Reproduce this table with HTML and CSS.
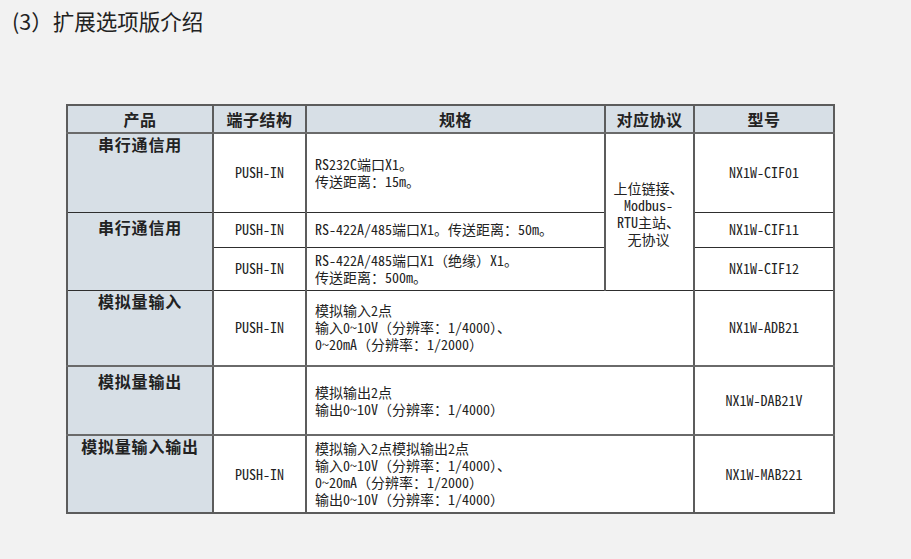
FILE: index.html
```html
<!DOCTYPE html>
<html lang="zh-CN">
<head>
<meta charset="utf-8">
<link rel="stylesheet" href="styles.css">
</head>
<body>
<h1 class="title">(3）扩展选项版介绍</h1>
<table class="spec-table">
  <colgroup>
    <col class="c-prod"><col class="c-term"><col class="c-spec"><col class="c-proto"><col class="c-model">
  </colgroup>
  <thead>
    <tr class="r-head">
      <th>产品</th><th>端子结构</th><th>规格</th><th>对应协议</th><th>型号</th>
    </tr>
  </thead>
  <tbody>
    <tr class="r1">
      <td class="prod">串行通信用</td>
      <td class="term">PUSH-IN</td>
      <td class="spec"><div class="ln">RS232C端口X1。</div><div class="ln">传送距离：15m。</div></td>
      <td class="proto" rowspan="3"><div class="ln">上位链接、</div><div class="ln">Modbus-</div><div class="ln">RTU主站、</div><div class="ln">无协议</div></td>
      <td class="model">NX1W-CIF01</td>
    </tr>
    <tr class="r2">
      <td class="prod prod-2" rowspan="2">串行通信用</td>
      <td class="term">PUSH-IN</td>
      <td class="spec"><div class="ln">RS-422A/485端口X1。传送距离：50m。</div></td>
      <td class="model">NX1W-CIF11</td>
    </tr>
    <tr class="r3">
      <td class="term">PUSH-IN</td>
      <td class="spec"><div class="ln">RS-422A/485端口X1（绝缘）X1。</div><div class="ln">传送距离：500m。</div></td>
      <td class="model">NX1W-CIF12</td>
    </tr>
    <tr class="r4">
      <td class="prod">模拟量输入</td>
      <td class="term">PUSH-IN</td>
      <td class="spec" colspan="2"><div class="ln">模拟输入2点</div><div class="ln">输入0~10V（分辨率：1/4000）、</div><div class="ln">0~20mA（分辨率：1/2000）</div></td>
      <td class="model">NX1W-ADB21</td>
    </tr>
    <tr class="r5">
      <td class="prod prod-2">模拟量输出</td>
      <td class="term"></td>
      <td class="spec" colspan="2"><div class="ln">模拟输出2点</div><div class="ln">输出0~10V（分辨率：1/4000）</div></td>
      <td class="model">NX1W-DAB21V</td>
    </tr>
    <tr class="r6">
      <td class="prod">模拟量输入输出</td>
      <td class="term">PUSH-IN</td>
      <td class="spec" colspan="2"><div class="ln">模拟输入2点模拟输出2点</div><div class="ln">输入0~10V（分辨率：1/4000）、</div><div class="ln">0~20mA（分辨率：1/2000）</div><div class="ln">输出0~10V（分辨率：1/4000）</div></td>
      <td class="model">NX1W-MAB221</td>
    </tr>
  </tbody>
</table>
</body>
</html>
```
FILE: styles.css
```css
html, body {
  margin: 0;
  padding: 0;
  background: #f2f2f2;
}

body {
  padding: 7px 0 0 12px;
  font-family: "Noto Sans CJK SC", "Noto Sans", sans-serif;
  color: #1e1e1e;
}

.title {
  margin: 0;
  font-size: 21.5px;
  font-weight: 400;
  line-height: 27px;
  color: #222;
}

.spec-table {
  margin: 70px 0 0 54px;
  border-collapse: collapse;
  table-layout: fixed;
  width: 767px;
  border: 2px solid #5c5c5c;
  font-family: "Noto Sans Mono CJK SC", "Liberation Mono", "Noto Sans CJK SC", monospace;
  font-size: 14px;
  line-height: 17px;
  color: #222;
}

.c-prod { width: 146px; }
.c-term { width: 93px; }
.c-spec { width: 299px; }
.c-proto { width: 89px; }
.c-model { width: 140px; }

.spec-table th,
.spec-table td {
  border-left: 2px solid #5c5c5c;
  border-right: 2px solid #5c5c5c;
  border-top: 1px solid #2e2e2e;
  border-bottom: 1px solid #2e2e2e;
  padding: 0;
}

.spec-table th {
  background: #d7dfe6;
  font-family: "Noto Sans CJK SC", sans-serif;
  font-weight: 700;
  font-size: 16px;
  letter-spacing: 0.5px;
  height: 26px;
  border-bottom: 2px solid #6a6a6a;
  text-align: center;
  vertical-align: middle;
}

.spec-table td {
  background: #fff;
  vertical-align: middle;
}

.spec-table td.prod {
  background: #d7dfe6;
  font-family: "Noto Sans CJK SC", sans-serif;
  font-weight: 700;
  font-size: 16px;
  letter-spacing: 0.8px;
  line-height: 20px;
  text-align: center;
  vertical-align: top;
  padding-top: 0;
}

.spec-table td.prod-2 {
  padding-top: 4px;
}

.ln {
  height: 17px;
  white-space: nowrap;
}

.term,
.model {
  text-align: center;
}

.spec-table td.spec {
  padding-left: 8px;
  text-align: left;
}

.spec-table td.proto {
  text-align: center;
  vertical-align: top;
  padding-top: 46px;
  padding-right: 2px;
}

.r1 { height: 79px; }
.r2 { height: 35px; }
.r3 { height: 43px; }
.r4 { height: 76px; }
.r5 { height: 69px; }
.r6 { height: 78px; }

.r4 td { border-bottom: 2px solid #6a6a6a; }
.r5 td { border-bottom: 2px solid #6a6a6a; }
.r6 td { border-bottom: 2px solid #5c5c5c; }
```
